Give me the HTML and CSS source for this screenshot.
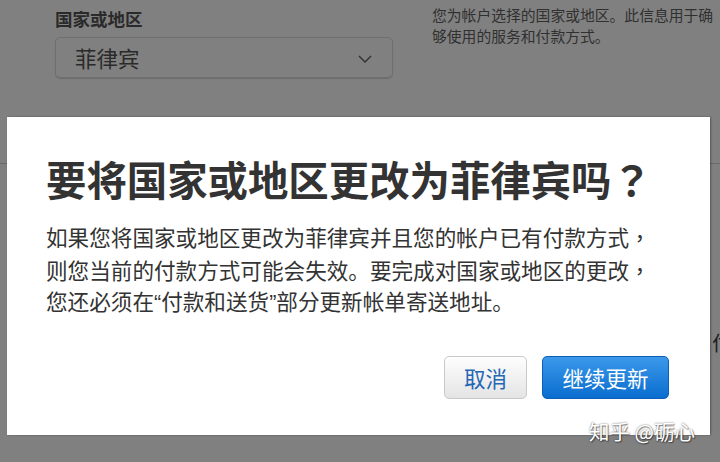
FILE: index.html
```html
<!DOCTYPE html>
<html lang="zh-CN">
<head>
<meta charset="utf-8">
<title>更改国家或地区</title>
<link rel="stylesheet" href="styles.css">
</head>
<body>
<div class="page">
  <div class="top">
    <div class="field">
      <div class="label">国家或地区</div>
      <div class="select">
        <span class="select-value">菲律宾</span>
        <svg class="chev" width="14" height="8" viewBox="0 0 14 8"><path d="M1 1 L7 7 L13 1" fill="none" stroke="#2e2e2e" stroke-width="1.3"/></svg>
      </div>
    </div>
    <div class="desc">您为帐户选择的国家或地区。此信息用于确<br>够使用的服务和付款方式。</div>
  </div>
  <div class="divider"></div>
  <div class="bgrow"><span class="bgtext">付</span></div>
</div>

<div class="modal">
  <h1 class="title">要将国家或地区更改为菲律宾吗<span class="cp" lang="zh-TW">？</span></h1>
  <p class="body">如果您将国家或地区更改为菲律宾并且您的帐户已有付款方式<span class="cp" lang="zh-TW">，</span><br>则您当前的付款方式可能会失效。要完成对国家或地区的更改<span class="cp" lang="zh-TW">，</span><br>您还必须在“付款和送货”部分更新帐单寄送地址。</p>
  <div class="actions">
    <button class="btn btn-cancel">取消</button>
    <button class="btn btn-primary">继续更新</button>
  </div>
</div>

<div class="watermark">知乎 @砺心</div>
</body>
</html>
```

FILE: styles.css
```css
html, body {
  margin: 0;
  padding: 0;
}
body {
  width: 720px;
  height: 462px;
  overflow: hidden;
  position: relative;
  background: #808080;
  font-family: "Liberation Sans", "Noto Sans CJK SC", sans-serif;
  color: #2b2b2b;
}
.page {
  width: 720px;
  overflow: hidden;
}
.top {
  display: flex;
  align-items: flex-start;
}
.field {
  flex: none;
  padding-left: 55px;
  padding-top: 9px;
  width: 338px;
}
.label {
  font-size: 17.5px;
  line-height: 22px;
  font-weight: 700;
  color: #2a2a2a;
}
.select {
  margin-top: 6px;
  height: 39px;
  border: 1px solid #6f6f6f;
  border-radius: 5px;
  box-shadow: 0 1px 1px rgba(0,0,0,0.15);
  display: flex;
  align-items: center;
  justify-content: space-between;
  padding: 0 20px 0 19px;
}
.select-value {
  font-size: 21.5px;
  color: #2a2a2a;
}
.chev {
  display: block;
  margin-top: 2px;
}
.desc {
  flex: none;
  margin-left: 39px;
  padding-top: 6px;
  font-size: 14.8px;
  line-height: 21px;
  color: #303030;
  white-space: nowrap;
}
.divider {
  margin-top: 85px;
  height: 1px;
  background: #6a6a6a;
}
.bgrow {
  padding-top: 168px;
  padding-left: 712px;
  white-space: nowrap;
}
.bgtext {
  font-size: 20px;
  line-height: 24px;
  color: #1e1e1e;
}
.modal {
  position: absolute;
  left: 7px;
  top: 117px;
  width: 703px;
  height: 318px;
  box-sizing: border-box;
  background: #ffffff;
  box-shadow: 1px 0 2px rgba(0,0,0,0.35);
  padding: 38px 41px 0 39px;
}
.title {
  margin: 0;
  font-family: "Noto Sans CJK SC", sans-serif;
  font-size: 40.4px;
  line-height: 48px;
  font-weight: 700;
  color: #333333;
  white-space: nowrap;
}
.cp {
  font-family: "Noto Sans CJK TC", sans-serif;
}
.body {
  margin: 18px 0 0 0;
  font-size: 21.6px;
  line-height: 31px;
  color: #333333;
  white-space: nowrap;
}
.actions {
  margin-top: 38px;
  display: flex;
  justify-content: flex-end;
  gap: 15px;
}
.btn {
  height: 43px;
  box-sizing: border-box;
  border-radius: 5px;
  font-family: "Noto Sans CJK SC", sans-serif;
  font-size: 21.5px;
  line-height: 1;
  padding: 0;
  cursor: pointer;
}
.btn-cancel {
  width: 83px;
  background: linear-gradient(#fefefe, #e4e4e4);
  border: 1px solid #c9c9c9;
  color: #2467b4;
}
.btn-primary {
  width: 127px;
  background: linear-gradient(#3b98ea, #0a6dcf);
  border: 1px solid #0b5fb6;
  color: #ffffff;
}
.watermark {
  position: absolute;
  left: 589px;
  top: 419px;
  font-family: "Noto Sans CJK SC", sans-serif;
  font-size: 20.5px;
  line-height: 24px;
  color: #ffffff;
  text-shadow: 0 0 2px rgba(0,0,0,0.6), 1px 1px 1px rgba(0,0,0,0.4);
  white-space: nowrap;
}
```
